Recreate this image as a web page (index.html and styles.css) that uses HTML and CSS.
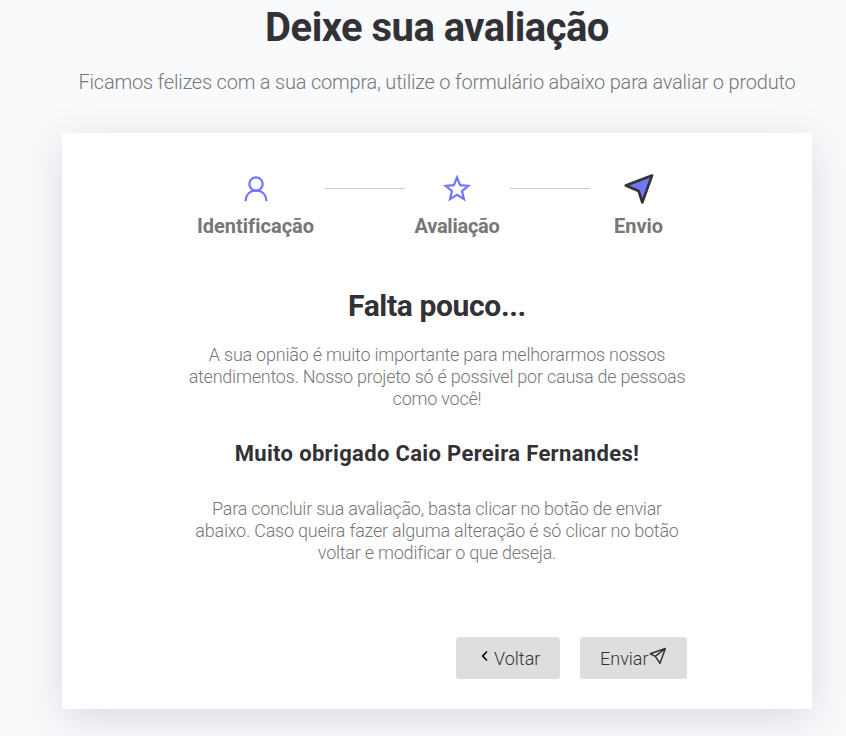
FILE: index.html
```html
<!DOCTYPE html>
<html lang="pt-BR">
<head>
<meta charset="utf-8">
<title>Deixe sua avaliação</title>
<link rel="stylesheet" href="styles.css">
</head>
<body>
<div class="page">
  <header>
    <h1><span>Deixe sua avaliação</span></h1>
    <p class="subtitle">Ficamos felizes com a sua compra, utilize o formulário abaixo para avaliar o produto</p>
  </header>
  <main class="card">
    <div class="steps">
      <div class="step step-user">
        <svg width="30" height="30" viewBox="0 0 24 24" fill="none" stroke="#7177f8" stroke-width="1.8"><circle cx="12" cy="8" r="5.300"/><path d="M3.500 21.700C3.900 16.800 7 13.300 12 13.300s8.100 3.500 8.500 8.400"/></svg>
        <span>Identificação</span>
      </div>
      <i class="line"></i>
      <div class="step step-review">
        <svg width="30" height="30" viewBox="0 0 30 30" fill="none" stroke="#7177f8" stroke-width="2.200"><path d="M15 3.500l3.100 7.700 8.200.6-6.300 5.300 2 8.100-7-4.400-7 4.400 2-8.100-6.300-5.300 8.200-.6z"/></svg>
        <span>Avaliação</span>
      </div>
      <i class="line"></i>
      <div class="step step-send">
        <svg width="30" height="30" viewBox="0 0 30 30" fill="#7177f8" stroke="#333" stroke-width="2.700" stroke-linejoin="round"><path d="M28 1.600L1.800 11.600l12.800 5.300 3.700 11.500z"/></svg>
        <span>Envio</span>
      </div>
    </div>
    <h2>Falta pouco...</h2>
    <p class="text">A sua opnião é muito importante para melhorarmos nossos<br>atendimentos. Nosso projeto só é possivel por causa de pessoas<br>como você!</p>
    <h3>Muito obrigado Caio Pereira Fernandes!</h3>
    <p class="text">Para concluir sua avaliação, basta clicar no botão de enviar<br>abaixo. Caso queira fazer alguma alteração é só clicar no botão<br>voltar e modificar o que deseja.</p>
    <div class="actions">
      <button class="back" type="button"><svg width="18" height="18" viewBox="0 0 18 18" fill="none" stroke="#000" stroke-width="1.600"><path d="M11 4.500L6.700 9l4.300 4.500"/></svg><span>Voltar</span></button>
      <button class="send" type="button"><span>Enviar</span><svg width="18" height="18" viewBox="0 0 18 18" fill="none" stroke="#333" stroke-width="1.500" stroke-linejoin="round"><path d="M16.300 1.500L1.300 6.800l5 2.500 4.700 7zM16.300 1.500l-10 7.800"/></svg></button>
    </div>
  </main>
</div>
</body>
</html>
```
FILE: styles.css
```css
* { box-sizing: border-box; margin: 0; padding: 0; }
html { background: #f9fafc; overflow: hidden; }
body { font-family: Roboto, "Liberation Sans", sans-serif; color: #323236; height: 736px; overflow: hidden; font-variant-ligatures: none; }
.page { width: 750px; margin-left: 62px; padding-top: 4px; text-align: center; white-space: nowrap; }
h1 { font-size: 40px; line-height: 48px; font-weight: 700; letter-spacing: -.53px; }
.subtitle { margin-top: 18px; font-size: 20px; line-height: 24px; font-weight: 350; letter-spacing: -.21px; color: #777; }
.card { margin-top: 39px; height: 576px; padding: 41px 125px 30px; background: #fff; box-shadow: 0 10px 40px rgba(50, 50, 60, .15); }
.steps { display: flex; height: 64px; margin: 0 20px 0 10px; }
.step { display: flex; flex-direction: column; align-items: center; font-size: 20px; line-height: 24px; font-weight: 700; color: #777; }
.step svg { margin-bottom: 10px; flex: none; }
.step-user { width: 117px; }
.step-review { width: 84px; letter-spacing: -.25px; }
.step-send { width: 49px; }
.line { width: 80px; height: 1px; margin: 14px 10px 0 11px; background: #ccc; }
.line + .step-send { margin-left: 14px; }
h2 { margin-top: 50px; font-size: 30px; line-height: 36px; font-weight: 700; letter-spacing: -.36px; }
.text { margin-top: 20px; font-size: 18px; line-height: 22px; font-weight: 350; letter-spacing: -.23px; color: #777; }
h3 { margin-top: 31px; font-size: 22px; line-height: 26px; font-weight: 700; letter-spacing: .34px; }
h3 + .text { margin-top: 31px; }
.actions { display: flex; justify-content: flex-end; gap: 20px; margin-top: 73px; }
button { display: flex; height: 42px; padding: 1px 20px 0; border: 0; border-radius: 3px; background: #dedede; color: #333; font: 300 18px/42px Roboto, "Liberation Sans", sans-serif; white-space: nowrap; }
.back { width: 104px; }
.send { width: 107px; }
button svg { flex: none; margin-top: 9px; }
button span { flex: none; }
```
